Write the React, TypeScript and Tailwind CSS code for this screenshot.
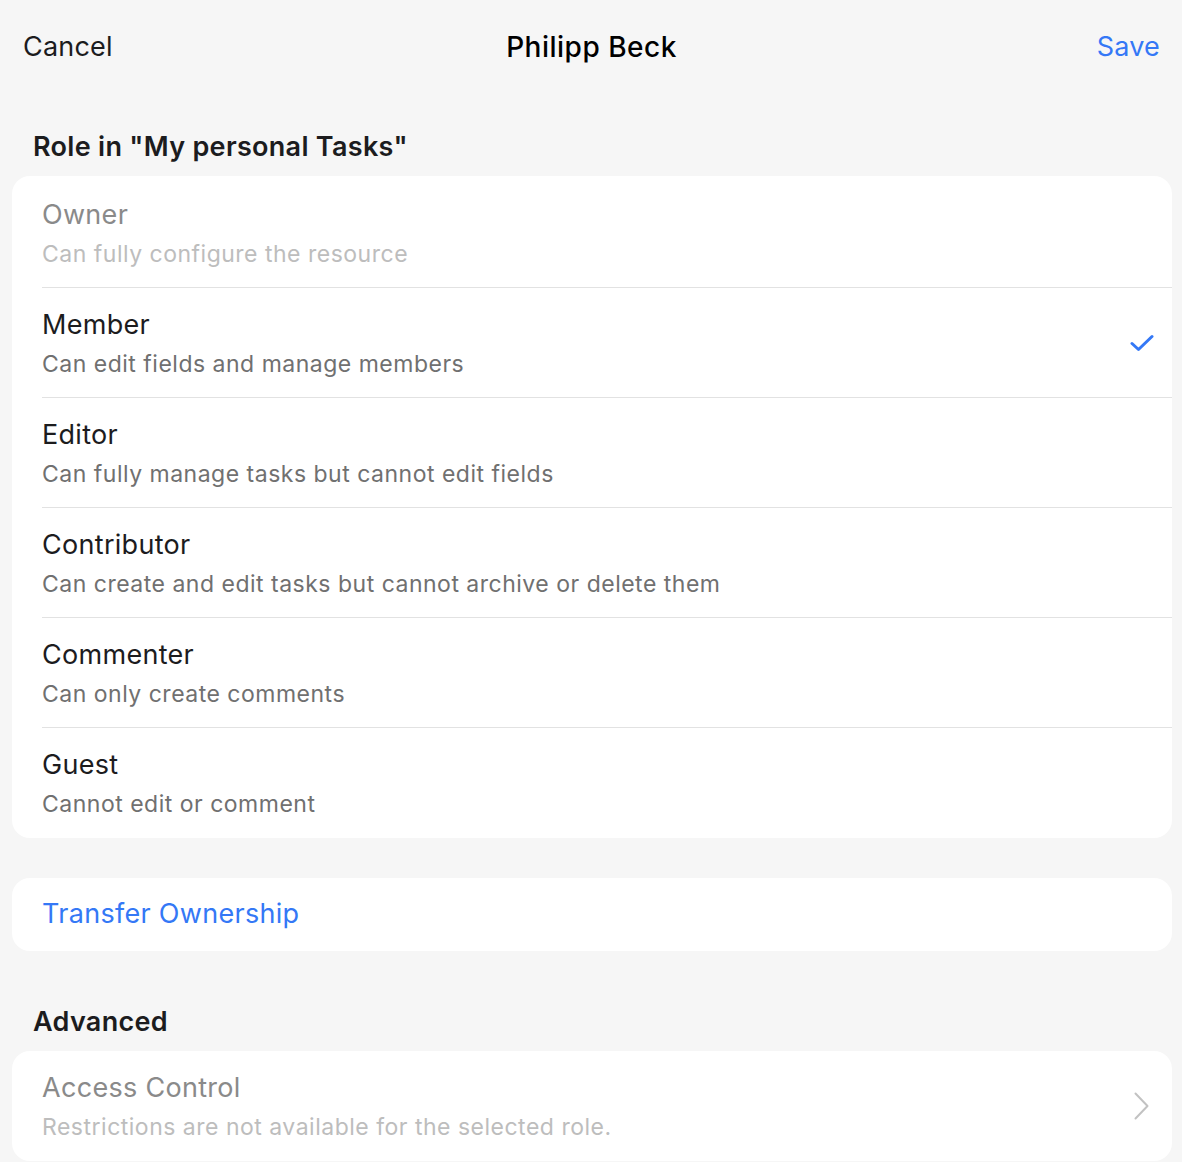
interface Role {
    title: string;
    subtitle: string;
    disabled?: boolean;
    selected?: boolean;
}

const roles: Role[] = [
    { title: 'Owner', subtitle: 'Can fully configure the resource', disabled: true },
    { title: 'Member', subtitle: 'Can edit fields and manage members', selected: true },
    { title: 'Editor', subtitle: 'Can fully manage tasks but cannot edit fields' },
    { title: 'Contributor', subtitle: 'Can create and edit tasks but cannot archive or delete them' },
    { title: 'Commenter', subtitle: 'Can only create comments' },
    { title: 'Guest', subtitle: 'Cannot edit or comment' },
];

function Check() {
    return (
        <svg width="24" height="18" viewBox="0 0 24 18" fill="none">
            <path d="M2 9.5 L8.5 15.5 L22 2.5" stroke="#3478f6" strokeWidth="3" strokeLinecap="round" strokeLinejoin="round" />
        </svg>
    );
}

function Chevron() {
    return (
        <svg width="15" height="28" viewBox="0 0 15 28" fill="none">
            <path d="M1.5 1.5 L13.5 14 L1.5 26.5" stroke="#c2c2c2" strokeWidth="2" strokeLinecap="round" strokeLinejoin="round" />
        </svg>
    );
}

function RoleRow({ role, first, last }: { role: Role; first: boolean; last: boolean }) {
    return (
        <div className="relative flex items-center pl-[30px] pr-[18px]">
            <div className={`flex-1 flex flex-col gap-[9px] pb-[20px] ${first ? 'pt-[23px]' : 'pt-[21px]'}`}>
                <span className={`text-[27px] leading-[32px] tracking-[0.3px] ${role.disabled ? 'text-[#8a8a8a]' : 'text-[#1c1c1e]'}`}>
                    {role.title}
                </span>
                <span className={`text-[23px] leading-[28px] tracking-[0.5px] ${role.disabled ? 'text-[#bdbdbd]' : 'text-[#707070]'}`}>
                    {role.subtitle}
                </span>
            </div>
            {role.selected && <Check />}
            {!last && <div className="absolute bottom-0 left-[30px] right-0 h-px bg-[#e2e2e2]" />}
        </div>
    );
}

export default function App() {
    return (
        <div className="min-h-screen bg-[#f6f6f6] font-['Inter',sans-serif] pb-[1px]">
            {/* Nav bar */}
            <div className="h-[94px] flex items-center justify-between pl-[23px] pr-[22px]">
                <button className="text-[27px] tracking-[0.2px] text-[#1c1c1e] w-[200px] text-left">Cancel</button>
                <span className="text-[28px] tracking-[0.5px] font-medium text-black">Philipp Beck</span>
                <button className="text-[27px] tracking-[0.2px] text-[#3478f6] w-[200px] text-right">Save</button>
            </div>

            <h2 className="mt-[36px] ml-[33px] text-[27px] leading-[34px] tracking-[0.3px] font-semibold text-[#1c1c1e]">
                Role in "My personal Tasks"
            </h2>
            <div className="mt-[12px] ml-[12px] mr-[10px] bg-white rounded-[18px]">
                {roles.map((r, i) => (
                    <RoleRow key={r.title} role={r} first={i === 0} last={i === roles.length - 1} />
                ))}
            </div>

            <div className="mt-[40px] ml-[12px] mr-[10px] bg-white rounded-[18px] h-[73px] flex items-center pl-[30px]">
                <span className="text-[27px] tracking-[0.3px] text-[#3478f6]">Transfer Ownership</span>
            </div>

            <h2 className="mt-[54px] ml-[33px] text-[27px] leading-[34px] tracking-[0.3px] font-semibold text-[#1c1c1e]">
                Advanced
            </h2>
            <div className="mt-[12px] ml-[12px] mr-[10px] bg-white rounded-[18px] flex items-center pl-[30px] pr-[23px]">
                <div className="flex-1 flex flex-col gap-[9px] pt-[21px] pb-[20px]">
                    <span className="text-[27px] leading-[32px] tracking-[0.3px] text-[#8a8a8a]">Access Control</span>
                    <span className="text-[23px] leading-[28px] tracking-[0.5px] text-[#bdbdbd]">
                        Restrictions are not available for the selected role.
                    </span>
                </div>
                <Chevron />
            </div>
        </div>
    );
}
